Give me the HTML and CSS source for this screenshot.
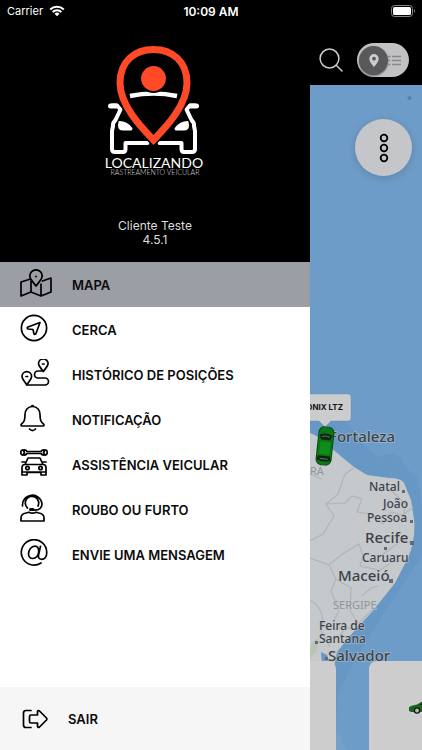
FILE: index.html
```html
<!DOCTYPE html>
<html lang="pt-BR">
<head>
<meta charset="utf-8">
<meta name="viewport" content="width=device-width, initial-scale=1">
<title>Localizando</title>
<link rel="stylesheet" href="styles.css">
</head>
<body>
<div class="app">
  <div class="statusbar">
    <span class="carrier">Carrier
      <svg class="wifi" viewBox="0 0 16 12" aria-hidden="true"><path d="M8 11.3 5.500 8.800a3.600 3.600 0 0 1 5 0z" fill="#fff"/><path d="M1.200 4.500a9.800 9.800 0 0 1 13.600 0M3.600 7a6.300 6.300 0 0 1 8.800 0" fill="none" stroke="#fff" stroke-width="2"/></svg>
    </span>
    <span class="clock">10:09 AM</span>
    <svg class="battery" viewBox="0 0 25 12" aria-label="Bateria"><rect x=".5" y=".5" width="21" height="11" rx="3" fill="none" stroke="#858585"/><rect x="2" y="2" width="18" height="8" rx="1.500" fill="#fff"/><path d="M23 4q2 2 0 4z" fill="#858585"/></svg>
  </div>

  <aside class="drawer">
    <header class="profile">
      <svg class="logo" viewBox="105 44 101 134" role="img" aria-label="Localizando Rastreamento Veicular">
        <g id="car-side" fill="none" stroke="#fff" stroke-width="4" stroke-linecap="round" stroke-linejoin="round">
          <path d="M112 105.500h5l3.500 4-5 10.500q-3 3-2.500 6l-1 5v18q0 3 3 3h8q2.500 0 2.500-3v-6h22"/>
          <path d="M119.500 122q7 0 12 6.500l-.5 1h-8q-4 0-4-4z" fill="#fff" stroke-width="2"/>
          <path d="M110.500 106h6" stroke-width="5"/>
        </g>
        <use href="#car-side" transform="matrix(-1 0 0 1 307 0)"/>
        <path d="M130 96q23.500-5 47 0" fill="none" stroke="#fff" stroke-width="4.500"/>
        <path d="M153.500 140C143 129 120 106 120 83c0-22 15-33.500 33.500-33.500S187 61 187 83c0 23-23 46-33.500 57z" fill="none" stroke="#000" stroke-width="10"/>
        <path d="M153.500 140C143 129 120 106 120 83c0-22 15-33.500 33.500-33.500S187 61 187 83c0 23-23 46-33.500 57z" fill="none" stroke="#ff4927" stroke-width="7"/>
        <circle cx="153.500" cy="78.500" r="14.500" fill="#000"/><circle cx="153.500" cy="78.500" r="12.400" fill="#ff4927"/>
        <text class="logo-name" x="154" y="168" text-anchor="middle">LOCALIZANDO</text>
        <text class="logo-sub" x="155" y="175" text-anchor="middle">RASTREAMENTO VEICULAR</text>
      </svg>
      <p class="client">Cliente Teste<br>4.5.1</p>
    </header>

    <nav class="menu">
      <a class="item active" href="#mapa">
        <svg class="icon" viewBox="0 0 32 28"><path d="M10.500 10 1 13v14l10-4 10 4 10-4V9l-8.500 3M11 12v11M21 15v12M16 17C12.500 12.500 9.800 10 9.800 7a6.200 6.200 0 0 1 12.400 0c0 3-2.700 5.500-6.200 10z"/><circle cx="16" cy="7.500" r="1" fill="#000" stroke="none"/></svg>
        <span>MAPA</span></a>
      <a class="item" href="#cerca">
        <svg class="icon" viewBox="0 0 32 28"><circle cx="14" cy="14" r="12.600"/><path d="m20 8.500-12 4.500q-1.500 1 0 2l5 .5 1 4.500q1 1 2-.5z"/></svg>
        <span>CERCA</span></a>
      <a class="item" href="#historico">
        <svg class="icon" viewBox="-1 0 32 28"><path d="M6 26h18a3.500 3.500 0 0 0 0-7h-7a3.500 3.500 0 0 1 0-7h5M5.800 26C3 21.500 1 20 1 17.500a4.800 4.800 0 0 1 9.600 0c0 2.500-2 4-4.800 8.500zM22.300 12.500C19.500 8.500 17.500 7 17.500 4.800a4.800 4.800 0 0 1 9.600 0c0 2.200-2 3.700-4.800 7.700z"/><path d="M5 17.500h1.600M21.500 5h1.600"/></svg>
        <span>HISTÓRICO DE POSIÇÕES</span></a>
      <a class="item" href="#notificacao">
        <svg class="icon" viewBox="0 0 32 28"><path d="M12.500 2.500c-5 0-7.500 4-7.500 8 0 6-1 7.500-3.500 9.500-.9.900-.5 2 .5 2h21c1 0 1.400-1.100.5-2-2.500-2-3.500-3.500-3.500-9.500 0-4-2.500-8-7.500-8zM11.500 2.500q1-2 2 0M9.500 25q3 3 6 0"/></svg>
        <span>NOTIFICAÇÃO</span></a>
      <a class="item" href="#assistencia">
        <svg class="icon" viewBox="0 0 32 28"><path d="M7 2.500h14q1-2 4-1.500l-1.500 2.500L25 6q-3 .5-4-1.500H7Q6 6.500 3 6l1.500-2.500L3 1q3-.5 4 1.500z"/><path d="M2.500 1Q.8 1 .8 3.500T2.500 6M25.500 1q1.700 0 1.700 2.500T25.500 6M8 9h12l3 6.500H5zM5 15.500q-3 0-3 3V26h5v-2.500h14V26h5v-7.500q0-3-3-3M2 13h3M26 13h-3M2 23h24"/><circle cx="7.500" cy="19" r="1.700"/><circle cx="20.500" cy="19" r="1.700"/></svg>
        <span>ASSISTÊNCIA VEICULAR</span></a>
      <a class="item" href="#roubo">
        <svg class="icon" viewBox="0 0 32 28"><path d="M2.500 12a9.800 9.800 0 1 1 19.500-2c0 4-3 6.500-8 6M7.500 14A6.700 6.700 0 1 1 18 12M1 27v-3c0-3 2-4.500 5-5l3-.8q3.500 2 7 0l3 .8c3 .5 5 2 5 5v3z"/><path d="M10.500 15.500h2.500" stroke-width="3"/></svg>
        <span>ROUBO OU FURTO</span></a>
      <a class="item" href="#mensagem">
        <svg class="icon" viewBox="0 0 32 28"><path d="M21 24A12.700 12.700 0 1 1 26.700 14c0 4-2.300 6.300-5 6.300-3 0-3.700-2-3-5l1.800-8M18.700 12.500c0 4-2.800 7-6 7-2.500 0-4.200-1.800-4.200-4.500 0-4.200 3-7.800 6.500-7.800 2.300 0 3.900 1.800 3.700 5.300z"/></svg>
        <span>ENVIE UMA MENSAGEM</span></a>
    </nav>

    <footer class="exit">
      <button type="button" class="exit-button">
        <svg class="exit-icon" viewBox="0 0 26 20"><path d="M9 1.500H4Q1.500 1.500 1.500 4v12q0 2.500 2.500 2.500h5M9 6h6.500V2.500q.5-1.500 2-.5l7 7q.7 1 0 2l-7 7q-1.500 1-2-.5V14H9q-1.500 0-1.500-1.500v-5Q7.500 6 9 6z"/></svg>
        <span>SAIR</span>
      </button>
    </footer>
  </aside>

  <main class="screen">
    <div class="toolbar">
      <button type="button" class="search" aria-label="Buscar"><svg viewBox="0 0 24 24"><circle cx="10.500" cy="10.500" r="9.400"/><path d="m17.500 17.500 5.500 5.500"/></svg></button>
      <label class="toggle">
        <input type="checkbox" role="switch" aria-label="Mapa ou lista" checked>
        <span class="thumb"><svg viewBox="0 0 10 13"><path fill-rule="evenodd" d="M5 13C2.500 9.500.3 7.500.3 4.700a4.700 4.700 0 0 1 9.400 0C9.700 7.500 7.500 9.500 5 13zM5 2.800a1.900 1.900 0 1 0 0 3.800 1.900 1.900 0 0 0 0-3.800z" fill="#cdcdcf"/></svg></span>
        <svg class="list" viewBox="0 0 13 11"><path d="M0 1.500h2.500M4 1.500h9M0 5.500h2.500M4 5.500h9M0 9.500h2.500M4 9.500h9" stroke="#88888b" stroke-width="1.600"/></svg>
      </label>
    </div>

    <section class="map">
      <svg class="map-canvas" viewBox="310 85 112 665" preserveAspectRatio="xMinYMin slice" role="img" aria-label="Mapa do nordeste do Brasil">
        <rect x="310" y="85" width="1000" height="1000" fill="#6e9cc8"/>
        <path d="M310 402q32 8 50 38l16 17q22-7 27 4 3 9 14 16l5 30v48l-34 52-28 45-22 40-4 58H310z" fill="#6697c5"/>
        <path d="M310 433q11 4 20 14l13 11 11 9 13 8 22 3q12 0 15 5l7 17 3 19q2 20-6 39l-13 25-24 30-16 17-18 22-4 20-23 1z" fill="#c5c9cc"/>
        <path d="M310 648q4-9 9-10l-3 14-6 6z" fill="#b4c7b2"/>
        <path d="M321 652l6 3 3 8h-8z" fill="#6697c5"/>
        <path d="M337 732q5 2 4 10l6 8h-12z" fill="#74a0c9"/>
        <g fill="none" stroke="#b1b5b9" stroke-width="1.200">
          <path d="M354 468l-9 6-7 20-12 10 8 12-11 18-13 7M326 504l19-1 7-7 10 3-5 13 13 2 13 10 8-12 12 3 10-8M310 558l19 7 12-10 18-11 4 12-3 10 20 4 12-8 16-2M329 565l7 14 15 9-1 22 8 14 14-14M336 579l-5 12 8 20-5 9M382 555l20-15 9 3M310 600q17 10 11 30l9 17M391 490l14 14-2 15"/>
          <path d="M310 474l12 5M362 596l9-8 8-2M339 636l8-9 4 2"/>
        </g>
        <g fill="#656a70">
          <rect x="402" y="490" width="3" height="3"/><rect x="410" y="520" width="3" height="3"/><rect x="410" y="541" width="4" height="4"/><rect x="384" y="547" width="3" height="3"/><rect x="389" y="579" width="4" height="4"/><rect x="315" y="641" width="3" height="3"/><rect x="325" y="657" width="3" height="3"/>
        </g>
        <circle cx="409.500" cy="98" r="2" fill="#5681ab"/>
        <g class="places">
          <text class="region" x="310" y="475">RA</text>
          <text class="city" x="329" y="442">Fortaleza</text>
          <text class="town" x="369" y="491">Natal</text>
          <text class="town" x="383" y="508">João</text>
          <text class="town" x="367" y="522">Pessoa</text>
          <text class="city" x="365" y="543">Recife</text>
          <text class="town" x="362" y="562">Caruaru</text>
          <text class="city" x="338" y="581">Maceió</text>
          <text class="region" x="333" y="609">SERGIPE</text>
          <text class="town" x="319" y="630">Feira de</text>
          <text class="town" x="319" y="643">Santana</text>
          <text class="city" x="328" y="661">Salvador</text>
        </g>
        <path d="M300 394h48q3 0 3 3v21q0 3-3 3h-17l-6 6-6-6h-19z" fill="#cbcccd" stroke="#5e82a5" stroke-opacity=".35"/>
        <text class="vehicle" x="343" y="410" text-anchor="end">ONIX LTZ</text>
        <g transform="rotate(6 325 446)">
          <rect x="317" y="426.500" width="16" height="39" rx="6" fill="#064a0b"/><rect x="318" y="427" width="14" height="38" rx="6" fill="#087914"/>
          <path d="M318.500 435q6.500-3 13 0l-2 5h-9zM319 456h12l1 4q-7 3-14 0z" fill="#122416"/><path d="M320 442h10v12h-10z" fill="#118d1b"/><path d="M321 437q4-2 8 0M321 459h8" stroke="#61746b" stroke-width="1" fill="none"/>
        </g>
      </svg>
      <button type="button" class="more" aria-label="Mais opções"><svg viewBox="0 0 10 30"><circle cx="5" cy="5" r="3.300"/><circle cx="5" cy="15" r="3.300"/><circle cx="5" cy="25" r="3.300"/></svg></button>
      <div class="cards">
        <article class="card"></article>
        <article class="card next">
          <svg class="car" viewBox="0 0 40 14" role="img" aria-label="Veículo"><path d="M0 10V6q3-2 8-2.500L14 0h11l7 4 7 2v5H2z" fill="#17651f"/><path d="m10 4 5-3h9l5 3z" fill="#172018"/><circle cx="8" cy="9.500" r="3.300" fill="#161a17"/><circle cx="8" cy="9.500" r="1.900" fill="#b7bab7"/><circle cx="32" cy="9.500" r="3.300" fill="#161a17"/></svg>
        </article>
      </div>
    </section>
  </main>
</div>
</body>
</html>
```
FILE: styles.css
```css
* { box-sizing: border-box; }
body { margin: 0; font-family: Inter, "Liberation Sans", sans-serif; color: #0b0b0b; background: #000; }
button { border: 0; padding: 0; font: inherit; color: inherit; background: none; cursor: pointer; }
svg { display: block; flex-shrink: 0; }
.app { position: relative; display: flex; min-height: 100vh; overflow: hidden; }

.statusbar { position: absolute; inset: 0 0 auto; z-index: 2; display: grid; grid-template-columns: 1fr auto 1fr; align-items: center; height: 22px; padding: 0 6px; color: #fff; font-size: 11px; }
.carrier { display: flex; align-items: center; gap: 6px; padding-left: 1px; }
.wifi { width: 16px; height: 12px; }
.clock { font-size: 12px; font-weight: 600; }
.battery { width: 25px; height: 12px; justify-self: end; }

.drawer { display: flex; flex-direction: column; flex: 0 0 310px; background: #fff; }
.profile { display: flex; flex-direction: column; align-items: center; gap: 41px; height: 262px; padding-top: 44px; background: #000; color: #ddd; }
.logo { width: 101px; height: 134px; }
.logo-name { font: 14px Lato, sans-serif; fill: #fff; }
.logo-sub { font: 300 7px Lato, sans-serif; fill: #ddd; }
.client { margin: 0; font-size: 12px; line-height: 14px; text-align: center; }

.menu { display: flex; flex-direction: column; }
.item { display: flex; align-items: center; gap: 20px; height: 45px; padding: 0 20px; color: inherit; font-size: 13px; font-weight: 600; text-decoration: none; }
.item.active { background: #9c9ea6; }
.icon { width: 32px; height: 28px; margin-bottom: 4px; }
.icon, .exit-icon { fill: none; stroke: #000; stroke-width: 1.7; stroke-linecap: round; stroke-linejoin: round; }
.exit { margin-top: auto; height: 63px; background: #f6f6f6; }
.exit-button { display: flex; align-items: center; gap: 20px; width: 100%; height: 100%; padding: 0 22px; font-size: 13px; font-weight: 600; }
.exit-icon { width: 26px; height: 20px; }

.screen { display: flex; flex: 1; flex-direction: column; min-width: 0; }
.toolbar { display: flex; align-items: center; justify-content: flex-end; gap: 14px; height: 85px; padding: 35px 13px 0 0; background: #000; }
.search svg { width: 24px; height: 24px; fill: none; stroke: #ccc; stroke-width: 1.5; stroke-linecap: round; }
.toggle { display: flex; align-items: center; justify-content: space-between; width: 52px; height: 34px; padding: 2px 8px 2px 2px; border-radius: 17px; background: #c2c2c4; }
.toggle input { position: absolute; opacity: 0; }
.thumb { display: grid; place-items: center; width: 29px; height: 29px; border-radius: 50%; background: #59595b; box-shadow: 0 1px 2px #777; }
.thumb svg { width: 10px; height: 13px; }
.list { width: 13px; height: 11px; }
.toggle .list { flex-shrink: 1; }

.map { position: relative; flex: 1; overflow: hidden; background: #6e9cc8; }
.map-canvas { position: absolute; inset: 0; width: 100%; height: 100%; }
.places text { fill: #3c4249; stroke: #c5c9cc; stroke-width: 1.5px; stroke-opacity: 0.6; paint-order: stroke; font-family: "Noto Sans", sans-serif; }
.places .city { font-size: 15px; font-weight: 500; }
.places .town { font-size: 12px; font-weight: 500; }
.places .region { font-size: 11px; fill: #8f969d; }
.vehicle { font: 700 8px Inter, sans-serif; fill: #151515; }
.more { position: absolute; top: 34px; right: 10px; display: grid; place-items: center; width: 57px; height: 57px; border-radius: 50%; background: #c4c6c9; box-shadow: 0 2px 8px rgba(0, 0, 0, 0.15); }
.more svg { width: 10px; height: 30px; fill: none; stroke: #000; stroke-width: 1.8; }
.cards { position: absolute; inset: auto 0 0; display: flex; gap: 33px; height: 89px; }
.card { flex: 0 0 26px; border-radius: 0 8px 0 0; background: #cdcdcd; }
.card.next { flex: 1; padding: 40px 0 0 40px; border-radius: 8px 0 0; overflow: hidden; }
.car { width: 40px; height: 14px; }
```
